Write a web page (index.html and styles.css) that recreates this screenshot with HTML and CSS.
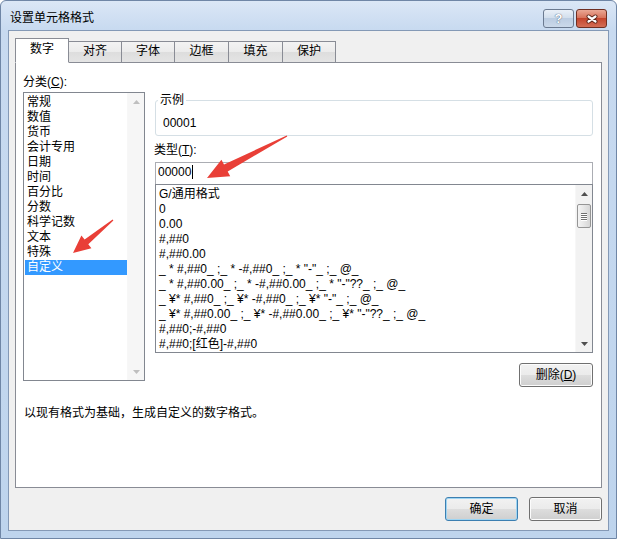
FILE: index.html
```html
<!DOCTYPE html>
<html lang="zh-CN">
<head>
  <meta charset="UTF-8">
  <title>设置单元格格式</title>
  <link rel="stylesheet" href="styles.css">
</head>
<body>
  <div class="window">
    <div class="titlebar">
      <span class="title">设置单元格格式</span>
      <div class="caption-btns">
        <span class="cbtn help">?</span>
        <span class="cbtn close">
          <svg width="12" height="10" viewBox="-6 -5 12 10">
            <path d="M-3.5,-2.5 L3.5,2.5 M3.5,-2.5 L-3.5,2.5" stroke="#5a2418" stroke-width="4" stroke-linecap="round"/>
            <path d="M-3.5,-2.5 L3.5,2.5 M3.5,-2.5 L-3.5,2.5" stroke="#fff" stroke-width="2.2" stroke-linecap="round"/>
          </svg>
        </span>
      </div>
    </div>

    <div class="client">
      <div class="tabs">
        <div class="tab active" style="width:54px">数字</div>
        <div class="tab" style="width:54px">对齐</div>
        <div class="tab" style="width:54px">字体</div>
        <div class="tab" style="width:55px">边框</div>
        <div class="tab" style="width:55px">填充</div>
        <div class="tab" style="width:54px">保护</div>
      </div>

      <div class="panel">
        <div class="cols">
          <div class="left">
            <div class="label">分类(<u>C</u>):</div>
            <div class="listbox catlist">
              <div class="items">
                <div>常规</div>
                <div>数值</div>
                <div>货币</div>
                <div>会计专用</div>
                <div>日期</div>
                <div>时间</div>
                <div>百分比</div>
                <div>分数</div>
                <div>科学记数</div>
                <div>文本</div>
                <div>特殊</div>
                <div class="sel">自定义</div>
              </div>
              <div class="vscroll disabled">
                <span class="sbtn"><svg width="7" height="4"><polygon points="0,4 3.5,0 7,4" /></svg></span>
                <span class="track"></span>
                <span class="sbtn"><svg width="7" height="4"><polygon points="0,0 3.5,4 7,0" /></svg></span>
              </div>
            </div>
          </div>

          <div class="right">
            <fieldset class="sample">
              <legend>示例</legend>
              <div>00001</div>
            </fieldset>
            <div class="tlabel">类型(<u>T</u>):</div>
            <div class="input">00000<span class="caret"></span></div>
            <div class="listbox fmtlist">
              <div class="items">
                <div>G/通用格式</div>
                <div>0</div>
                <div>0.00</div>
                <div>#,##0</div>
                <div>#,##0.00</div>
                <div>_ * #,##0_ ;_ * -#,##0_ ;_ * "-"_ ;_ @_</div>
                <div>_ * #,##0.00_ ;_ * -#,##0.00_ ;_ * "-"??_ ;_ @_</div>
                <div>_ ¥* #,##0_ ;_ ¥* -#,##0_ ;_ ¥* "-"_ ;_ @_</div>
                <div>_ ¥* #,##0.00_ ;_ ¥* -#,##0.00_ ;_ ¥* "-"??_ ;_ @_</div>
                <div>#,##0;-#,##0</div>
                <div>#,##0;[红色]-#,##0</div>
              </div>
              <div class="vscroll">
                <span class="sbtn"><svg width="7" height="4"><polygon points="0,4 3.5,0 7,4" /></svg></span>
                <span class="thumb"><i></i><i></i><i></i><i></i></span>
                <span class="track"></span>
                <span class="sbtn"><svg width="7" height="4"><polygon points="0,0 3.5,4 7,0" /></svg></span>
              </div>
            </div>
            <div class="del-row">
              <button class="btn del">删除(<u>D</u>)</button>
            </div>
          </div>
        </div>

        <p class="desc">以现有格式为基础，生成自定义的数字格式。</p>
      </div>

      <div class="footer">
        <button class="btn default">确定</button>
        <button class="btn">取消</button>
      </div>
    </div>

    <!-- red arrows drawn over the dialog -->
    <svg class="arrows" width="617" height="539" viewBox="0 0 617 539">
      <polygon points="113.4,220.5 88.3,244.3 91.4,248.3 73,253 81.4,235.6 84.6,239.5 112.6,219.5" />
      <polygon points="287.3,136.5 227.7,171.4 230.2,176.3 207,178 221.4,159.7 224,164.5 286.7,135.5" />
    </svg>
  </div>
</body>
</html>
```

FILE: styles.css
```css
* {
  box-sizing: border-box;
}

body {
  margin: 0;
  font-family: "Liberation Sans", "Noto Sans CJK SC", sans-serif;
  font-size: 12px;
  line-height: 15px;
  color: #000;
  background: #fff;
}

.window {
  position: relative;
  width: 617px;
  height: 539px;
  display: flex;
  flex-direction: column;
  padding: 0 7px 7px;
  border: 1px solid #6f86a6;
  border-radius: 6px 6px 0 0;
  background: linear-gradient(to bottom, #dbe7f6 0, #c8daf0 28px, #bed4ed 100%);
}

.titlebar {
  height: 29px;
  display: flex;
  align-items: flex-start;
}

.title {
  flex: 1;
  padding: 10px 0 0 2px;
}

.caption-btns {
  display: flex;
  gap: 2px;
  margin: 8px 2px 0 0;
}

.cbtn {
  width: 31px;
  height: 19px;
  border: 1px solid #6b7a90;
  border-radius: 3px;
  display: flex;
  align-items: center;
  justify-content: center;
}

.help {
  background: linear-gradient(#eaf0f8, #d3dfed 45%, #bccde2 50%, #cbd9ea);
  color: #fff;
  font-weight: bold;
  font-size: 13px;
  text-shadow: 0 0 1px #53657e, 0 0 1px #53657e;
}

.close {
  border-color: #6e2f22;
  background: linear-gradient(#eaa895, #d8745d 45%, #c4452d 50%, #d36e56);
}

.client {
  flex: 1;
  display: flex;
  flex-direction: column;
  background: #f0f0f0;
  border: 1px solid #8499b6;
  padding: 7px 6px 9px;
}

/* tabs */
.tabs {
  display: flex;
  align-items: flex-end;
  height: 25px;
  margin-bottom: -1px;
  position: relative;
  z-index: 1;
}

.tab {
  height: 22px;
  margin-right: -1px;
  padding-top: 2px;
  text-align: center;
  border: 1px solid #898c95;
  background: linear-gradient(#f3f3f3, #ebebeb 50%, #dddddd 51%, #e4e4e4);
}

.tab.active {
  height: 25px;
  padding-top: 3px;
  background: #fff;
  border-bottom-color: #fff;
  position: relative;
  z-index: 2;
}

.panel {
  height: 426px;
  background: #fff;
  border: 1px solid #898c95;
  padding: 0 8px 0 7px;
}

.cols {
  display: flex;
  gap: 10px;
  height: 324px;
}

.left {
  width: 122px;
  padding-top: 12px;
}

.label {
  height: 15px;
  margin-bottom: 2px;
}

.right {
  width: 438px;
}

/* list boxes */
.listbox {
  display: flex;
  border: 1px solid #828790;
  background: #fff;
}

.catlist {
  height: 289px;
}

.fmtlist {
  height: 169px;
}

.items {
  flex: 1;
  padding: 2px 0 0 1px;
  overflow: hidden;
}

.items div {
  height: 15px;
  padding-left: 2px;
  white-space: pre;
}

.items .sel {
  background: #3399ff;
  color: #fff;
}

.vscroll {
  width: 17px;
  display: flex;
  flex-direction: column;
  background: #f2f2f2;
  border-left: 1px solid #f7f7f7;
}

.sbtn {
  height: 17px;
  display: flex;
  align-items: center;
  justify-content: center;
}

.sbtn polygon {
  fill: #4f4f4f;
}

.disabled {
  background: #f6f6f6;
}

.disabled .sbtn polygon {
  fill: #bfbfbf;
}

.track {
  flex: 1;
}

.thumb {
  height: 24px;
  margin: 2px 1px 0;
  border: 1px solid #959595;
  border-radius: 2px;
  background: linear-gradient(to right, #f4f4f4, #e6e6e6 50%, #d6d6d6);
  display: flex;
  flex-direction: column;
  align-items: center;
  justify-content: center;
  gap: 1px;
}

.thumb i {
  display: block;
  width: 6px;
  height: 1px;
  background: #6f6f6f;
  box-shadow: 0 1px 0 #fff;
}

/* sample box */
.sample {
  margin: 30px 0 0;
  padding: 8px 7px 4px;
  border: 1px solid #d5dfe5;
  border-radius: 3px;
  min-width: 0;
}

.sample legend {
  padding: 0 2px;
  margin-left: -5px;
  line-height: 15px;
}

.tlabel {
  height: 15px;
  margin: 7px 0 4px -1px;
}

.input {
  height: 22px;
  padding: 2px 0 0 2px;
  border: 1px solid #abadb3;
  border-bottom: none;
}

.caret {
  display: inline-block;
  width: 1px;
  height: 14px;
  margin-left: 1px;
  vertical-align: -3px;
  background: #000;
}

.del-row {
  display: flex;
  justify-content: flex-end;
  margin-top: 10px;
}

/* push buttons */
.btn {
  height: 24px;
  width: 73px;
  padding: 0;
  font: inherit;
  color: #000;
  border: 1px solid #707070;
  border-radius: 3px;
  background: linear-gradient(#f2f2f2, #ebebeb 50%, #dddddd 51%, #cfcfcf);
  box-shadow: inset 0 0 0 1px #fcfcfc;
}

.btn.del {
  width: 74px;
}

.btn.default {
  border-color: #3c7fb1;
  box-shadow: inset 0 0 0 1px #9ed5f3;
}

.desc {
  margin: 19px 0 0 1px;
  line-height: 15px;
}

.footer {
  display: flex;
  justify-content: flex-end;
  gap: 11px;
  margin-top: 9px;
}

.arrows {
  position: absolute;
  left: -1px;
  top: -1px;
  pointer-events: none;
}

.arrows polygon {
  fill: #e93f37;
}
```
